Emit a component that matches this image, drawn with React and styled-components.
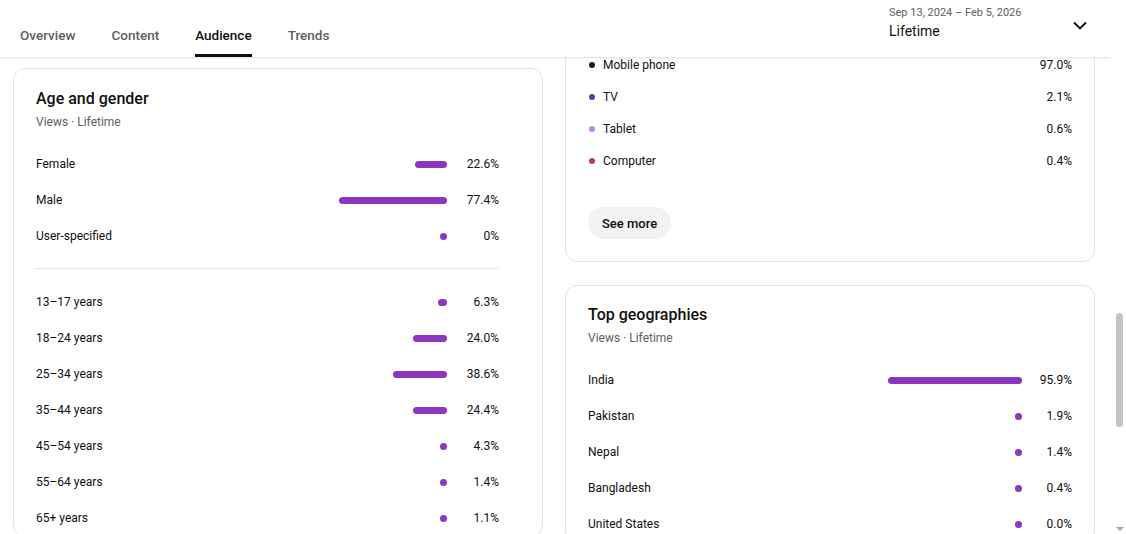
import React from 'react';
import styled, { createGlobalStyle } from 'styled-components';

const GlobalStyle = createGlobalStyle`
	body {
		margin: 0;
		background: #fff;
		font-family: Roboto, "Noto Sans", Arial, sans-serif;
		color: #0f0f0f;
		overflow: hidden;
	}
	* { box-sizing: border-box; }
`;

const BAR_COLOR = '#8c35c2';
const BAR_SCALE = 1.4; // 100% = 140px

const tabs = ['Overview', 'Content', 'Audience', 'Trends'];

const genders = [
	{ label: 'Female', pct: 22.6, text: '22.6%' },
	{ label: 'Male', pct: 77.4, text: '77.4%' },
	{ label: 'User-specified', pct: 0, text: '0%' },
];

const ages = [
	{ label: '13–17 years', pct: 6.3, text: '6.3%' },
	{ label: '18–24 years', pct: 24.0, text: '24.0%' },
	{ label: '25–34 years', pct: 38.6, text: '38.6%' },
	{ label: '35–44 years', pct: 24.4, text: '24.4%' },
	{ label: '45–54 years', pct: 4.3, text: '4.3%' },
	{ label: '55–64 years', pct: 1.4, text: '1.4%' },
	{ label: '65+ years', pct: 1.1, text: '1.1%' },
];

const devices = [
	{ label: 'Mobile phone', color: '#1e1433', text: '97.0%' },
	{ label: 'TV', color: '#6a35a6', text: '2.1%' },
	{ label: 'Tablet', color: '#c384e4', text: '0.6%' },
	{ label: 'Computer', color: '#bf3674', text: '0.4%' },
];

const geographies = [
	{ label: 'India', pct: 95.9, text: '95.9%' },
	{ label: 'Pakistan', pct: 1.9, text: '1.9%' },
	{ label: 'Nepal', pct: 1.4, text: '1.4%' },
	{ label: 'Bangladesh', pct: 0.4, text: '0.4%' },
	{ label: 'United States', pct: 0.0, text: '0.0%' },
];

const BarRow = ({ item, gap = 12 }) => (
	<Row>
		<Label>{item.label}</Label>
		<BarTrack>
			<Bar style={{ width: Math.max(7, item.pct * BAR_SCALE) }} />
		</BarTrack>
		<Pct $gap={gap}>{item.text}</Pct>
	</Row>
);

const App = () => {
	return (
		<>
			<GlobalStyle />
			<Page>
				<Viewport>
					<Header>
						<Tabs>
							{tabs.map((t) => (
								<Tab key={t} $active={t === 'Audience'}>{t}</Tab>
							))}
						</Tabs>
						<DateSelector>
							<DateText>
								<DateRange>Sep 13, 2024 – Feb 5, 2026</DateRange>
								<DateLabel>Lifetime</DateLabel>
							</DateText>
							<svg width="24" height="24" viewBox="0 0 24 24" fill="none">
								<path d="M6 9.5l6 6 6-6" stroke="#0f0f0f" strokeWidth="1.9" />
							</svg>
						</DateSelector>
					</Header>

					<Content>
						<LeftColumn>
							<Card $padTop={19} $padRight={43}>
								<CardTitle>Age and gender</CardTitle>
								<CardSub>Views · Lifetime</CardSub>
								<List>
									{genders.map((g) => <BarRow key={g.label} item={g} />)}
								</List>
								<Divider />
								<List $flush>
									{ages.map((a) => <BarRow key={a.label} item={a} />)}
								</List>
							</Card>
						</LeftColumn>

						<RightColumn>
							<DeviceCard>
								{devices.map((d) => (
									<DeviceRow key={d.label}>
										<Dot $color={d.color} />
										<Label>{d.label}</Label>
										<Pct $gap={12}>{d.text}</Pct>
									</DeviceRow>
								))}
								<SeeMore>See more</SeeMore>
							</DeviceCard>

							<Card $padTop={18} $padRight={22}>
								<CardTitle>Top geographies</CardTitle>
								<CardSub>Views · Lifetime</CardSub>
								<List>
									{geographies.map((g) => <BarRow key={g.label} item={g} gap={10} />)}
								</List>
							</Card>
						</RightColumn>
					</Content>
				</Viewport>

				<Scrollbar>
					<Thumb />
					<Spacer />
					<ArrowDown />
				</Scrollbar>
			</Page>
		</>
	);
};

export default App;

const Page = styled.div`
	display: flex;
	height: 534px;
	overflow: hidden;
`;

const Viewport = styled.div`
	position: relative;
	flex: 1;
	overflow: hidden;
`;

const Header = styled.header`
	position: absolute;
	top: 0;
	left: 0;
	right: 0;
	z-index: 2;
	height: 57px;
	display: flex;
	justify-content: space-between;
	padding: 0 19px 0 20px;
	background: #fff;
	box-shadow: 0 1px 2px rgba(0, 0, 0, 0.12);
`;

const Tabs = styled.nav`
	display: flex;
	gap: 36px;
	height: 100%;
`;

const Tab = styled.div`
	display: flex;
	align-items: center;
	padding-top: 16px;
	border-bottom: 3px solid ${(p) => (p.$active ? '#0f0f0f' : 'transparent')};
	font-size: 13.5px;
	font-weight: 500;
	color: ${(p) => (p.$active ? '#0f0f0f' : '#606060')};
`;

const DateSelector = styled.div`
	width: 203px;
	display: flex;
	justify-content: space-between;
	align-items: flex-start;
	padding-top: 5px;

	svg { margin-top: 8px; }
`;

const DateText = styled.div`
	display: flex;
	flex-direction: column;
`;

const DateRange = styled.div`
	font-size: 11px;
	line-height: 16px;
	color: #606060;
`;

const DateLabel = styled.div`
	font-size: 14px;
	line-height: 20px;
	color: #0f0f0f;
`;

const Content = styled.main`
	display: grid;
	grid-template-columns: 530px 530px;
	column-gap: 22px;
	padding-left: 13px;
	align-items: start;
`;

const LeftColumn = styled.div`
	padding-top: 68px;
`;

const RightColumn = styled.div`
	display: flex;
	flex-direction: column;
	gap: 23px;
`;

const Card = styled.section`
	border: 1px solid #e3e3e3;
	border-radius: 12px;
	padding: ${(p) => p.$padTop}px ${(p) => p.$padRight}px 0 22px;
	background: #fff;
`;

const DeviceCard = styled(Card).attrs({ $padTop: 48, $padRight: 22 })`
	padding-bottom: 22px;
`;

const CardTitle = styled.h2`
	margin: 0;
	font-size: 16px;
	line-height: 22px;
	font-weight: 500;
	color: #0f0f0f;
`;

const CardSub = styled.div`
	margin-top: 4px;
	font-size: 12px;
	line-height: 16px;
	color: #606060;
`;

const List = styled.div`
	margin-top: ${(p) => (p.$flush ? 0 : 16)}px;
	display: flex;
	flex-direction: column;
`;

const Row = styled.div`
	display: flex;
	align-items: center;
	height: 36px;
`;

const Label = styled.div`
	flex: 1;
	font-size: 12px;
	color: #0f0f0f;
`;

const BarTrack = styled.div`
	width: 140px;
	display: flex;
	justify-content: flex-end;
`;

const Bar = styled.div`
	height: 7px;
	border-radius: 4px;
	background: ${BAR_COLOR};
`;

const Pct = styled.div`
	width: 40px;
	margin-left: ${(p) => p.$gap}px;
	text-align: right;
	font-size: 12px;
	color: #0f0f0f;
`;

const Divider = styled.hr`
	margin: 14px 0 15px;
	border: none;
	border-top: 1px solid #e5e5e5;
`;

const DeviceRow = styled.div`
	display: flex;
	align-items: center;
	height: 32px;
`;

const Dot = styled.span`
	width: 6px;
	height: 6px;
	border-radius: 50%;
	margin: 0 8px 0 1px;
	background: ${(p) => p.$color};
`;

const SeeMore = styled.button`
	margin-top: 30px;
	height: 32px;
	padding: 0 14px;
	border: none;
	border-radius: 16px;
	background: #f2f2f2;
	font-family: inherit;
	font-size: 13px;
	font-weight: 500;
	color: #0f0f0f;
`;

const Scrollbar = styled.div`
	width: 15px;
	display: flex;
	flex-direction: column;
	align-items: center;
	padding: 313px 0 3px 2px;
	background: #fff;
`;

const Thumb = styled.div`
	width: 7px;
	height: 114px;
	border-radius: 4px;
	background: #c4c4c4;
`;

const Spacer = styled.div`
	flex: 1;
`;

const ArrowDown = styled.div`
	width: 0;
	height: 0;
	border-left: 4px solid transparent;
	border-right: 4px solid transparent;
	border-top: 4px solid #a3a3a3;
`;
